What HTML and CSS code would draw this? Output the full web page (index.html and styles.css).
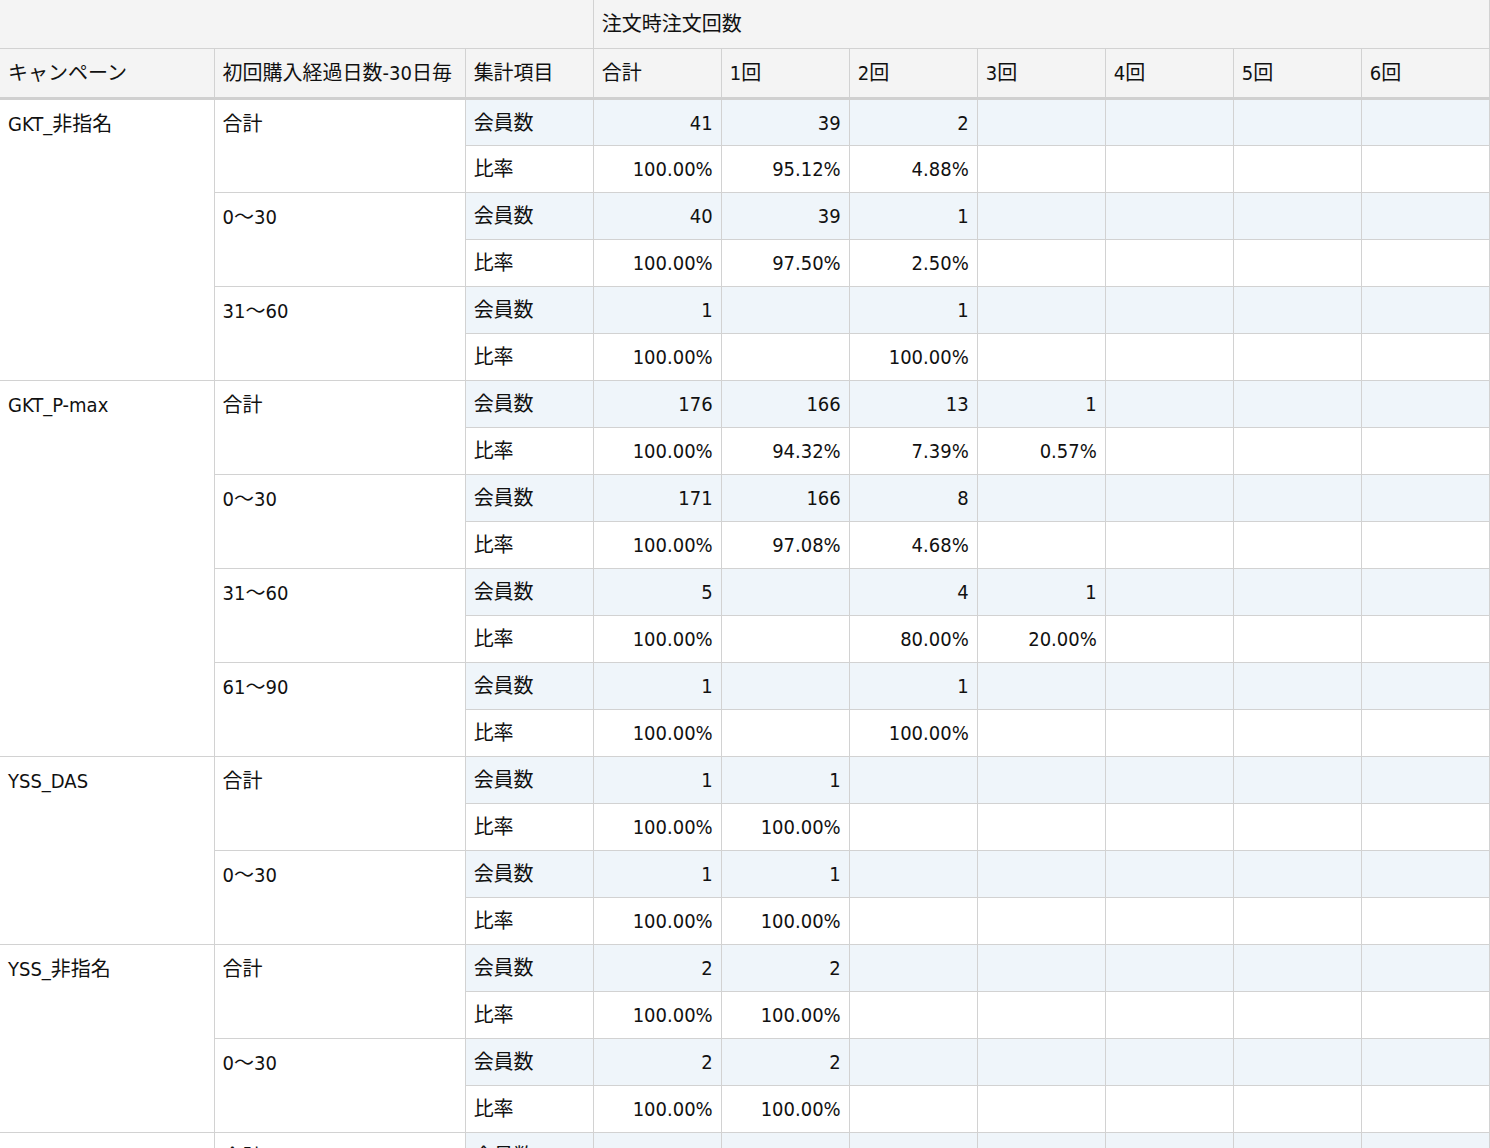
FILE: index.html
```html
<!DOCTYPE html>
<html lang="ja">
<head>
<meta charset="utf-8">
<link rel="stylesheet" href="styles.css">
</head>
<body>
<table class="pivot">
<colgroup>
<col class="c-camp"><col class="c-days"><col class="c-item">
<col class="c-num"><col class="c-num"><col class="c-num"><col class="c-num"><col class="c-num"><col class="c-num"><col class="c-num">
</colgroup>
<thead>
<tr class="h-top">
<th colspan="3" class="blank"></th>
<th colspan="7" class="group">注文時注文回数</th>
</tr>
<tr class="h-cols">
<th>キャンペーン</th><th>初回購入経過日数-30日毎</th><th>集計項目</th>
<th>合計</th><th>1回</th><th>2回</th><th>3回</th><th>4回</th><th>5回</th><th>6回</th>
</tr>
</thead>
<tbody>
<tr class="cnt"><td rowspan="6" class="camp">GKT_非指名</td><td rowspan="2" class="days">合計</td><td class="item">会員数</td><td>41</td><td>39</td><td>2</td><td></td><td></td><td></td><td></td></tr>
<tr class="rate"><td class="item">比率</td><td>100.00%</td><td>95.12%</td><td>4.88%</td><td></td><td></td><td></td><td></td></tr>
<tr class="cnt"><td rowspan="2" class="days">0〜30</td><td class="item">会員数</td><td>40</td><td>39</td><td>1</td><td></td><td></td><td></td><td></td></tr>
<tr class="rate"><td class="item">比率</td><td>100.00%</td><td>97.50%</td><td>2.50%</td><td></td><td></td><td></td><td></td></tr>
<tr class="cnt"><td rowspan="2" class="days">31〜60</td><td class="item">会員数</td><td>1</td><td></td><td>1</td><td></td><td></td><td></td><td></td></tr>
<tr class="rate"><td class="item">比率</td><td>100.00%</td><td></td><td>100.00%</td><td></td><td></td><td></td><td></td></tr>

<tr class="cnt"><td rowspan="8" class="camp">GKT_P-max</td><td rowspan="2" class="days">合計</td><td class="item">会員数</td><td>176</td><td>166</td><td>13</td><td>1</td><td></td><td></td><td></td></tr>
<tr class="rate"><td class="item">比率</td><td>100.00%</td><td>94.32%</td><td>7.39%</td><td>0.57%</td><td></td><td></td><td></td></tr>
<tr class="cnt"><td rowspan="2" class="days">0〜30</td><td class="item">会員数</td><td>171</td><td>166</td><td>8</td><td></td><td></td><td></td><td></td></tr>
<tr class="rate"><td class="item">比率</td><td>100.00%</td><td>97.08%</td><td>4.68%</td><td></td><td></td><td></td><td></td></tr>
<tr class="cnt"><td rowspan="2" class="days">31〜60</td><td class="item">会員数</td><td>5</td><td></td><td>4</td><td>1</td><td></td><td></td><td></td></tr>
<tr class="rate"><td class="item">比率</td><td>100.00%</td><td></td><td>80.00%</td><td>20.00%</td><td></td><td></td><td></td></tr>
<tr class="cnt"><td rowspan="2" class="days">61〜90</td><td class="item">会員数</td><td>1</td><td></td><td>1</td><td></td><td></td><td></td><td></td></tr>
<tr class="rate"><td class="item">比率</td><td>100.00%</td><td></td><td>100.00%</td><td></td><td></td><td></td><td></td></tr>

<tr class="cnt"><td rowspan="4" class="camp">YSS_DAS</td><td rowspan="2" class="days">合計</td><td class="item">会員数</td><td>1</td><td>1</td><td></td><td></td><td></td><td></td><td></td></tr>
<tr class="rate"><td class="item">比率</td><td>100.00%</td><td>100.00%</td><td></td><td></td><td></td><td></td><td></td></tr>
<tr class="cnt"><td rowspan="2" class="days">0〜30</td><td class="item">会員数</td><td>1</td><td>1</td><td></td><td></td><td></td><td></td><td></td></tr>
<tr class="rate"><td class="item">比率</td><td>100.00%</td><td>100.00%</td><td></td><td></td><td></td><td></td><td></td></tr>

<tr class="cnt"><td rowspan="4" class="camp">YSS_非指名</td><td rowspan="2" class="days">合計</td><td class="item">会員数</td><td>2</td><td>2</td><td></td><td></td><td></td><td></td><td></td></tr>
<tr class="rate"><td class="item">比率</td><td>100.00%</td><td>100.00%</td><td></td><td></td><td></td><td></td><td></td></tr>
<tr class="cnt"><td rowspan="2" class="days">0〜30</td><td class="item">会員数</td><td>2</td><td>2</td><td></td><td></td><td></td><td></td><td></td></tr>
<tr class="rate"><td class="item">比率</td><td>100.00%</td><td>100.00%</td><td></td><td></td><td></td><td></td><td></td></tr>

<tr class="cnt"><td rowspan="2" class="camp">Gdisplay_display</td><td rowspan="2" class="days">合計</td><td class="item">会員数</td><td>1</td><td>1</td><td></td><td></td><td></td><td></td><td></td></tr>
<tr class="rate"><td class="item">比率</td><td>100.00%</td><td>100.00%</td><td></td><td></td><td></td><td></td><td></td></tr>
</tbody>
</table>
</body>
</html>
```

FILE: styles.css
```css
html, body {
  margin: 0;
  padding: 0;
  background: #ffffff;
}

body {
  font-family: "DejaVu Sans Condensed", "Noto Sans CJK JP", sans-serif;
  font-size: 20px;
  color: #111111;
}

.pivot {
  border-collapse: collapse;
  table-layout: fixed;
  width: 1490px;
}

.c-camp { width: 214px; }
.c-days { width: 251px; }
.c-item { width: 128px; }
.c-num  { width: 128px; }

.pivot th,
.pivot td {
  border: 1px solid #d2d2d2;
  padding: 0 8px;
  line-height: 24px;
  height: 47px;
  box-sizing: border-box;
  white-space: nowrap;
  overflow: hidden;
}

.pivot th {
  background: #f4f4f4;
  font-weight: normal;
  text-align: left;
  vertical-align: middle;
}

.pivot th:first-child,
.pivot td.camp {
  border-left: none;
}

.h-top th {
  border-top: none;
  height: 48px;
}

.h-top .blank {
  border-left: none;
}

.h-cols th {
  height: 50px;
  border-bottom: 3px solid #d0d0d0;
}

.pivot td {
  text-align: right;
  vertical-align: middle;
  padding-top: 1px;
}

.pivot td.camp,
.pivot td.days,
.pivot td.item {
  text-align: left;
}

.pivot td.camp,
.pivot td.days {
  vertical-align: top;
  padding-top: 12px;
  background: #ffffff;
}

.cnt td {
  background: #eff5fa;
}

.rate td {
  background: #ffffff;
}
```
